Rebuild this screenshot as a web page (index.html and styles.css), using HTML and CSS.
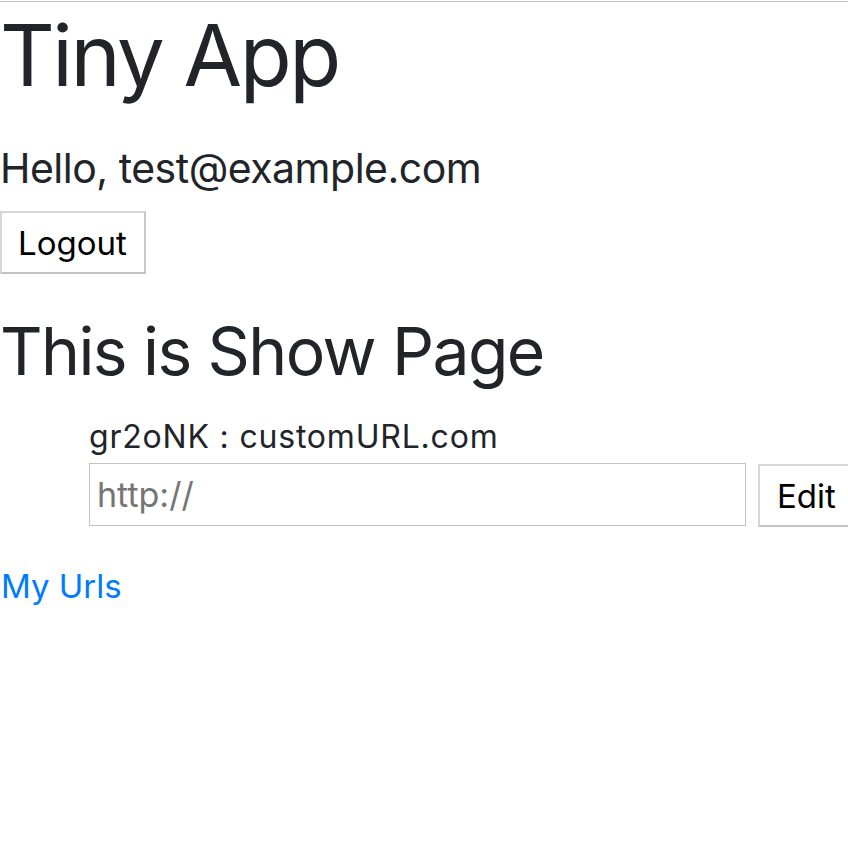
FILE: index.html
```html
<!DOCTYPE html>
<html lang="en">
<head>
<meta charset="utf-8">
<title>Tiny App</title>
<link rel="stylesheet" href="styles.css">
</head>
<body>
<div class="page">
  <div class="topline"></div>
  <h1 class="title">Tiny App</h1>
  <h5 class="hello">Hello, test@example.com</h5>
  <form class="logout-form">
    <button type="button" class="btn">Logout</button>
  </form>
  <h2 class="show-title">This is Show Page</h2>
  <ul class="url-list">
    <li class="url-item">
      <div class="url-line">gr2oNK : customURL.com</div>
      <form class="edit-row">
        <input class="url-input" type="text" placeholder="http://">
        <button type="button" class="btn btn-edit">Edit</button>
      </form>
    </li>
  </ul>
  <a class="my-urls" href="#">My Urls</a>
</div>
</body>
</html>
```

FILE: styles.css
```css
html, body {
  margin: 0;
  padding: 0;
  background: #fff;
}
.page {
  width: 848px;
  height: 844px;
  overflow: hidden;
  font-family: Inter, "Liberation Sans", sans-serif;
  color: #212529;
}
.topline {
  height: 1px;
  margin-top: 1px;
  background: #c4c4c4;
}
.title {
  margin: 3px 0 0 0;
  font-size: 85px;
  line-height: 1.2;
  font-weight: 400;
  letter-spacing: -2.5px;
}
.hello {
  margin: 37px 0 0 0;
  font-size: 41px;
  line-height: 1.2;
  font-weight: 400;
  letter-spacing: -0.5px;
}
.logout-form {
  margin: 18px 0 0 0;
  display: flex;
}
.btn {
  box-sizing: border-box;
  height: 63px;
  display: inline-flex;
  align-items: center;
  padding: 0 16px;
  background: #fff;
  border: 2px solid #d6d6d6;
  border-bottom-color: #c2c2c2;
  border-right-color: #c8c8c8;
  border-radius: 0;
  font-family: Inter, "Liberation Sans", sans-serif;
  font-size: 33px;
  color: #000;
}
.logout-form .btn {
  width: 146px;
}
.show-title {
  margin: 38px 0 0 0;
  font-size: 66px;
  line-height: 1.2;
  font-weight: 400;
  letter-spacing: -1.6px;
}
.url-list {
  margin: 23px 0 0 0;
  padding: 0 0 0 89px;
  list-style: none;
}
.url-line {
  font-size: 32px;
  line-height: 45px;
  letter-spacing: 0.8px;
}
.edit-row {
  margin: 4px 0 0 0;
  display: flex;
  align-items: flex-start;
  gap: 12px;
  width: 800px;
}
.url-input {
  box-sizing: border-box;
  flex: none;
  width: 657px;
  height: 63px;
  margin: 0;
  padding: 0 7px;
  border: 1px solid #c4c4c4;
  border-radius: 0;
  font-family: Inter, "Liberation Sans", sans-serif;
  font-size: 34px;
  color: #212529;
}
.url-input::placeholder {
  color: #757575;
}
.btn-edit {
  flex: none;
  margin-top: 1px;
  padding: 0 17px;
  width: 110px;
}
.my-urls {
  display: inline-block;
  margin: 35px 0 0 1px;
  font-size: 33px;
  line-height: 1.5;
  color: #007bff;
  text-decoration: none;
}
```
